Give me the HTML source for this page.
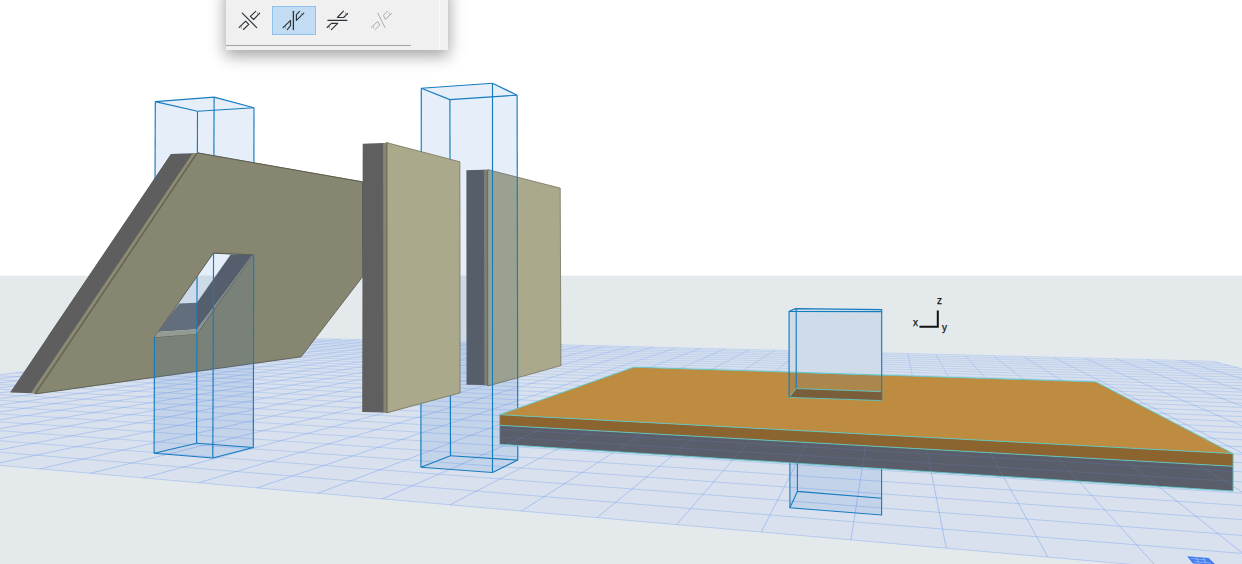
<!DOCTYPE html>
<html><head><meta charset="utf-8"><style>
html,body{margin:0;padding:0;width:1242px;height:564px;overflow:hidden;background:#fff;}
svg{display:block;}
</style></head><body>
<svg width="1242" height="564" viewBox="0 0 1242 564"><rect x="0" y="0" width="1242" height="276" fill="#ffffff"/>
<rect x="0" y="275.6" width="1242" height="289" fill="#e4e9ec"/>
<defs><clipPath id="gclip"><polygon points="2383.97,674.05 1213.25,361.21 322.87,338.65 -458.51,425.28"/></clipPath></defs>
<polygon points="2383.97,674.05 1213.25,361.21 322.87,338.65 -458.51,425.28" fill="#d8e1ed" />
<defs><linearGradient id="glg" gradientUnits="userSpaceOnUse" x1="0" y1="336" x2="0" y2="564"><stop offset="0" stop-color="#6f9bf0" stop-opacity="0.26"/><stop offset="0.3" stop-color="#6f9bf0" stop-opacity="0.38"/><stop offset="0.7" stop-color="#6f9bf0" stop-opacity="0.47"/><stop offset="1" stop-color="#6f9bf0" stop-opacity="0.5"/></linearGradient></defs>
<g stroke="url(#glg)" fill="none"><g stroke-width="0.75"><line x1="2383.97" y1="674.05" x2="-458.51" y2="425.28"/><line x1="2235.44" y1="634.35" x2="-404.59" y2="419.31"/><line x1="2113.81" y1="601.85" x2="-354.81" y2="413.79"/><line x1="2012.38" y1="574.75" x2="-308.72" y2="408.68"/><line x1="1926.51" y1="551.8" x2="-265.9" y2="403.93"/><line x1="1852.87" y1="532.13" x2="-226.04" y2="399.51"/><line x1="1789.02" y1="515.07" x2="-188.82" y2="395.38"/><line x1="1733.13" y1="500.13" x2="-154.01" y2="391.52"/><line x1="1683.8" y1="486.95" x2="-121.36" y2="387.9"/><line x1="1639.94" y1="475.23" x2="-90.69" y2="384.5"/><line x1="1600.69" y1="464.74" x2="-61.82" y2="381.3"/><line x1="1565.35" y1="455.3" x2="-34.6" y2="378.29"/><line x1="1533.38" y1="446.75" x2="-8.89" y2="375.43"/><line x1="1504.3" y1="438.98" x2="15.43" y2="372.74"/><line x1="1477.75" y1="431.89" x2="38.48" y2="370.18"/><line x1="1453.4" y1="425.38" x2="60.35" y2="367.76"/><line x1="1431.01" y1="419.4" x2="81.12" y2="365.46"/><line x1="1410.33" y1="413.87" x2="100.88" y2="363.26"/><line x1="1391.18" y1="408.75" x2="119.7" y2="361.18"/><line x1="1373.39" y1="404" x2="137.65" y2="359.19"/><line x1="1356.83" y1="399.58" x2="154.79" y2="357.29"/><line x1="1341.38" y1="395.45" x2="171.16" y2="355.47"/><line x1="1326.92" y1="391.58" x2="186.82" y2="353.74"/><line x1="1313.36" y1="387.96" x2="201.82" y2="352.07"/><line x1="1300.62" y1="384.56" x2="216.19" y2="350.48"/><line x1="1288.63" y1="381.35" x2="229.97" y2="348.95"/><line x1="1277.33" y1="378.33" x2="243.21" y2="347.49"/><line x1="1266.65" y1="375.48" x2="255.93" y2="346.08"/><line x1="1256.55" y1="372.78" x2="268.15" y2="344.72"/><line x1="1246.98" y1="370.22" x2="279.92" y2="343.41"/><line x1="1237.9" y1="367.8" x2="291.25" y2="342.16"/><line x1="1229.27" y1="365.49" x2="302.17" y2="340.95"/><line x1="1221.07" y1="363.3" x2="312.71" y2="339.78"/><line x1="1213.25" y1="361.21" x2="322.87" y2="338.65"/></g><g stroke-width="0.95"><line x1="2383.97" y1="674.05" x2="1213.25" y2="361.21"/><line x1="2183.14" y1="656.47" x2="1180.02" y2="360.37"/><line x1="1999.28" y1="640.38" x2="1147.43" y2="359.54"/><line x1="1830.32" y1="625.59" x2="1115.46" y2="358.73"/><line x1="1674.52" y1="611.96" x2="1084.11" y2="357.94"/><line x1="1530.4" y1="599.34" x2="1053.35" y2="357.16"/><line x1="1396.7" y1="587.64" x2="1023.17" y2="356.4"/><line x1="1272.32" y1="576.76" x2="993.54" y2="355.64"/><line x1="1156.32" y1="566.61" x2="964.46" y2="354.91"/><line x1="1047.89" y1="557.12" x2="935.92" y2="354.18"/><line x1="946.3" y1="548.23" x2="907.88" y2="353.47"/><line x1="850.93" y1="539.88" x2="880.35" y2="352.78"/><line x1="761.22" y1="532.03" x2="853.31" y2="352.09"/><line x1="676.69" y1="524.63" x2="826.74" y2="351.42"/><line x1="596.9" y1="517.65" x2="800.63" y2="350.76"/><line x1="521.46" y1="511.05" x2="774.98" y2="350.11"/><line x1="450.02" y1="504.79" x2="749.76" y2="349.47"/><line x1="382.28" y1="498.87" x2="724.97" y2="348.84"/><line x1="317.95" y1="493.24" x2="700.6" y2="348.22"/><line x1="256.79" y1="487.88" x2="676.64" y2="347.62"/><line x1="198.56" y1="482.79" x2="653.07" y2="347.02"/><line x1="143.06" y1="477.93" x2="629.89" y2="346.43"/><line x1="90.1" y1="473.29" x2="607.09" y2="345.85"/><line x1="39.51" y1="468.87" x2="584.66" y2="345.29"/><line x1="-8.87" y1="464.63" x2="562.58" y2="344.73"/><line x1="-55.17" y1="460.58" x2="540.86" y2="344.18"/><line x1="-99.52" y1="456.7" x2="519.48" y2="343.63"/><line x1="-142.06" y1="452.98" x2="498.43" y2="343.1"/><line x1="-182.88" y1="449.4" x2="477.71" y2="342.58"/><line x1="-222.1" y1="445.97" x2="457.31" y2="342.06"/><line x1="-259.79" y1="442.67" x2="437.23" y2="341.55"/><line x1="-296.05" y1="439.5" x2="417.44" y2="341.05"/><line x1="-330.97" y1="436.44" x2="397.96" y2="340.56"/><line x1="-364.6" y1="433.5" x2="378.76" y2="340.07"/><line x1="-397.03" y1="430.66" x2="359.86" y2="339.59"/><line x1="-428.31" y1="427.93" x2="341.23" y2="339.12"/><line x1="-458.51" y1="425.28" x2="322.87" y2="338.65"/></g></g>
<polygon points="10.1,392.6 171,154 193.9,153.4 32.5,393.3" fill="#5e5e5e" /><polygon points="31,393.1 192.4,153.5 198.9,152.9 37.1,393.9" fill="#8b8a73" /><line x1="34.7" y1="393.6" x2="196.5" y2="153.2" stroke="#5f5e52" stroke-width="0.8"/><path d="M35.6,393.9 L197.4,152.9 L362.5,181.9 L362.5,276.8 L301.1,356.8 Z M213.5,253 L252.9,254.8 L197,333.7 L154.4,337.3 Z" fill="#878670" fill-rule="evenodd" stroke="#5a5a4d" stroke-width="0.85"/>
<polygon points="179.3,303.5 197,302.7 197,329.3 157.1,331.9" fill="#6d7075" />
<polygon points="157.1,331.9 197,329.3 197,333.7 154.4,337.3" fill="#a3a38c" />
<polygon points="230.7,254.8 252.9,254.8 197,329 197,302.7" fill="#5d5f62" stroke="#5d5f62" stroke-width="0.3"/>
<line x1="252.6" y1="255.3" x2="197.4" y2="330.5" stroke="#8d8d7a" stroke-width="1.3"/>
<line x1="213.5" y1="253.2" x2="252.9" y2="255" stroke="#55554a" stroke-width="0.8"/>
<line x1="253.3" y1="255.8" x2="198" y2="332" stroke="#66665a" stroke-width="0.5"/>
<polygon points="155.3,101.6 214.1,97.1 254,107.7 253.3,447.5 212.8,458 154.1,453.2" fill="rgba(20,95,200,0.105)" />
<g stroke="#167cc0" stroke-width="1.15" fill="none"><line x1="155.3" y1="101.6" x2="214.1" y2="97.1"/><line x1="214.1" y1="97.1" x2="254" y2="107.7"/><line x1="254" y1="107.7" x2="197.5" y2="111.3"/><line x1="197.5" y1="111.3" x2="155.3" y2="101.6"/><line x1="154.1" y1="453.2" x2="212.8" y2="458"/><line x1="212.8" y1="458" x2="253.3" y2="447.5"/><line x1="253.3" y1="447.5" x2="196.6" y2="443.3"/><line x1="196.6" y1="443.3" x2="154.1" y2="453.2"/><line x1="155.3" y1="101.6" x2="154.1" y2="453.2"/><line x1="214.1" y1="97.1" x2="212.8" y2="458"/><line x1="254" y1="107.7" x2="253.3" y2="447.5"/><line x1="197.5" y1="111.3" x2="196.6" y2="443.3"/></g>
<defs><clipPath id="pclip"><polygon points="0,0 1242,0 1242,254.8 252.9,254.8 213.5,253 154.4,337.3 0,337.3"/></clipPath></defs>
<g clip-path="url(#pclip)"><polygon points="10.1,392.6 171,154 193.9,153.4 32.5,393.3" fill="#5e5e5e" /><polygon points="31,393.1 192.4,153.5 198.9,152.9 37.1,393.9" fill="#8b8a73" /><line x1="34.7" y1="393.6" x2="196.5" y2="153.2" stroke="#5f5e52" stroke-width="0.8"/><path d="M35.6,393.9 L197.4,152.9 L362.5,181.9 L362.5,276.8 L301.1,356.8 Z M213.5,253 L252.9,254.8 L197,333.7 L154.4,337.3 Z" fill="#878670" fill-rule="evenodd" stroke="#5a5a4d" stroke-width="0.85"/></g>
<polygon points="466.4,170.3 483.7,169.8 485.2,169.8 485.6,385.3 484.3,385.1 466.5,384.8" fill="#5f5f5f" />
<polygon points="483.9,169.8 489.2,169.6 489.4,386 484.4,385.1" fill="#86856f" />
<line x1="487.3" y1="170" x2="487.5" y2="385.8" stroke="#6e6d5c" stroke-width="0.9"/>
<polygon points="488.2,169.7 560.2,188.1 560.9,365.6 488.4,386" fill="#aaa98b" />
<polyline points="487.6,169.6 560.2,188.1 560.9,365.6 487.8,386" fill="none" stroke="#77765f" stroke-width="0.8"/>
<polygon points="421.3,88.3 492.5,83.2 517.1,95.2 517.8,460.1 492.5,472.5 420.9,467.2" fill="rgba(20,95,200,0.105)" />
<g stroke="#167cc0" stroke-width="1.15" fill="none"><line x1="421.3" y1="88.3" x2="492.5" y2="83.2"/><line x1="492.5" y1="83.2" x2="517.1" y2="95.2"/><line x1="517.1" y1="95.2" x2="449.9" y2="99.6"/><line x1="449.9" y1="99.6" x2="421.3" y2="88.3"/><line x1="420.9" y1="467.2" x2="492.5" y2="472.5"/><line x1="492.5" y1="472.5" x2="517.8" y2="460.1"/><line x1="517.8" y1="460.1" x2="450.5" y2="455.8"/><line x1="450.5" y1="455.8" x2="420.9" y2="467.2"/><line x1="421.3" y1="88.3" x2="420.9" y2="467.2"/><line x1="492.5" y1="83.2" x2="492.5" y2="472.5"/><line x1="517.1" y1="95.2" x2="517.8" y2="460.1"/><line x1="449.9" y1="99.6" x2="450.5" y2="455.8"/></g>
<polygon points="362.7,143.8 383.2,143 384.6,143 384.8,412.6 383.4,412.4 362.2,411.9" fill="#5f5f5f" />
<polygon points="383.1,143 388.6,142.6 388.8,412.9 383.5,412.4" fill="#86856f" />
<line x1="386.6" y1="143" x2="386.8" y2="412.6" stroke="#6e6d5c" stroke-width="0.9"/>
<polygon points="387.6,142.7 459.9,161.8 460.1,392.9 387.8,412.9" fill="#aaa98b" />
<polyline points="386.1,142.5 459.9,161.8 460.1,392.9 386.4,412.9" fill="none" stroke="#77765f" stroke-width="0.8"/>
<polygon points="789.9,455 881.6,455 881.6,515 789.9,507.8" fill="rgba(20,95,200,0.105)" />
<g stroke="#167cc0" stroke-width="1.1" fill="none"><polyline points="789.9,455 789.9,507.8 881.6,515 881.6,455"/><polyline points="797.4,455 797.4,491.4 881.6,498.2"/></g>
<line x1="797.4" y1="491.4" x2="789.9" y2="507.8" stroke="#167cc0" stroke-width="1.1"/>
<polygon points="499.6,425.3 1233.1,466.3 1233.1,491.1 499.6,444.3" fill="#5a5e6b" />
<defs><clipPath id="gsclip"><polygon points="499.6,425.3 1233.1,466.3 1233.1,491.1 499.6,444.3"/></clipPath></defs>
<g clip-path="url(#gsclip)" opacity="0.42"><g stroke="url(#glg)" fill="none"><g stroke-width="0.75"><line x1="2383.97" y1="674.05" x2="-458.51" y2="425.28"/><line x1="2235.44" y1="634.35" x2="-404.59" y2="419.31"/><line x1="2113.81" y1="601.85" x2="-354.81" y2="413.79"/><line x1="2012.38" y1="574.75" x2="-308.72" y2="408.68"/><line x1="1926.51" y1="551.8" x2="-265.9" y2="403.93"/><line x1="1852.87" y1="532.13" x2="-226.04" y2="399.51"/><line x1="1789.02" y1="515.07" x2="-188.82" y2="395.38"/><line x1="1733.13" y1="500.13" x2="-154.01" y2="391.52"/><line x1="1683.8" y1="486.95" x2="-121.36" y2="387.9"/><line x1="1639.94" y1="475.23" x2="-90.69" y2="384.5"/><line x1="1600.69" y1="464.74" x2="-61.82" y2="381.3"/><line x1="1565.35" y1="455.3" x2="-34.6" y2="378.29"/><line x1="1533.38" y1="446.75" x2="-8.89" y2="375.43"/><line x1="1504.3" y1="438.98" x2="15.43" y2="372.74"/><line x1="1477.75" y1="431.89" x2="38.48" y2="370.18"/><line x1="1453.4" y1="425.38" x2="60.35" y2="367.76"/><line x1="1431.01" y1="419.4" x2="81.12" y2="365.46"/><line x1="1410.33" y1="413.87" x2="100.88" y2="363.26"/><line x1="1391.18" y1="408.75" x2="119.7" y2="361.18"/><line x1="1373.39" y1="404" x2="137.65" y2="359.19"/><line x1="1356.83" y1="399.58" x2="154.79" y2="357.29"/><line x1="1341.38" y1="395.45" x2="171.16" y2="355.47"/><line x1="1326.92" y1="391.58" x2="186.82" y2="353.74"/><line x1="1313.36" y1="387.96" x2="201.82" y2="352.07"/><line x1="1300.62" y1="384.56" x2="216.19" y2="350.48"/><line x1="1288.63" y1="381.35" x2="229.97" y2="348.95"/><line x1="1277.33" y1="378.33" x2="243.21" y2="347.49"/><line x1="1266.65" y1="375.48" x2="255.93" y2="346.08"/><line x1="1256.55" y1="372.78" x2="268.15" y2="344.72"/><line x1="1246.98" y1="370.22" x2="279.92" y2="343.41"/><line x1="1237.9" y1="367.8" x2="291.25" y2="342.16"/><line x1="1229.27" y1="365.49" x2="302.17" y2="340.95"/><line x1="1221.07" y1="363.3" x2="312.71" y2="339.78"/><line x1="1213.25" y1="361.21" x2="322.87" y2="338.65"/></g><g stroke-width="0.95"><line x1="2383.97" y1="674.05" x2="1213.25" y2="361.21"/><line x1="2183.14" y1="656.47" x2="1180.02" y2="360.37"/><line x1="1999.28" y1="640.38" x2="1147.43" y2="359.54"/><line x1="1830.32" y1="625.59" x2="1115.46" y2="358.73"/><line x1="1674.52" y1="611.96" x2="1084.11" y2="357.94"/><line x1="1530.4" y1="599.34" x2="1053.35" y2="357.16"/><line x1="1396.7" y1="587.64" x2="1023.17" y2="356.4"/><line x1="1272.32" y1="576.76" x2="993.54" y2="355.64"/><line x1="1156.32" y1="566.61" x2="964.46" y2="354.91"/><line x1="1047.89" y1="557.12" x2="935.92" y2="354.18"/><line x1="946.3" y1="548.23" x2="907.88" y2="353.47"/><line x1="850.93" y1="539.88" x2="880.35" y2="352.78"/><line x1="761.22" y1="532.03" x2="853.31" y2="352.09"/><line x1="676.69" y1="524.63" x2="826.74" y2="351.42"/><line x1="596.9" y1="517.65" x2="800.63" y2="350.76"/><line x1="521.46" y1="511.05" x2="774.98" y2="350.11"/><line x1="450.02" y1="504.79" x2="749.76" y2="349.47"/><line x1="382.28" y1="498.87" x2="724.97" y2="348.84"/><line x1="317.95" y1="493.24" x2="700.6" y2="348.22"/><line x1="256.79" y1="487.88" x2="676.64" y2="347.62"/><line x1="198.56" y1="482.79" x2="653.07" y2="347.02"/><line x1="143.06" y1="477.93" x2="629.89" y2="346.43"/><line x1="90.1" y1="473.29" x2="607.09" y2="345.85"/><line x1="39.51" y1="468.87" x2="584.66" y2="345.29"/><line x1="-8.87" y1="464.63" x2="562.58" y2="344.73"/><line x1="-55.17" y1="460.58" x2="540.86" y2="344.18"/><line x1="-99.52" y1="456.7" x2="519.48" y2="343.63"/><line x1="-142.06" y1="452.98" x2="498.43" y2="343.1"/><line x1="-182.88" y1="449.4" x2="477.71" y2="342.58"/><line x1="-222.1" y1="445.97" x2="457.31" y2="342.06"/><line x1="-259.79" y1="442.67" x2="437.23" y2="341.55"/><line x1="-296.05" y1="439.5" x2="417.44" y2="341.05"/><line x1="-330.97" y1="436.44" x2="397.96" y2="340.56"/><line x1="-364.6" y1="433.5" x2="378.76" y2="340.07"/><line x1="-397.03" y1="430.66" x2="359.86" y2="339.59"/><line x1="-428.31" y1="427.93" x2="341.23" y2="339.12"/><line x1="-458.51" y1="425.28" x2="322.87" y2="338.65"/></g></g></g>
<polygon points="499.6,414.7 1233.1,453.6 1233.1,466.3 499.6,425.3" fill="#8b6430" />
<polygon points="499.6,414.7 633.7,367.2 1096,381.9 1233.1,453.6" fill="#be8c40" />
<g stroke="#5ec8c6" stroke-width="0.9" fill="none"><polygon points="499.6,414.7 633.7,367.2 1096,381.9 1233.1,453.6"/><line x1="499.6" y1="425.3" x2="1233.1" y2="466.3"/><polyline points="499.6,414.7 499.6,444.3 1233.1,491.1 1233.1,453.6"/></g>
<polygon points="789.1,311.3 795.5,308.7 881.7,309.6 881.7,375.3 789.1,372.3" fill="#d0dbe9" />
<polygon points="789.1,371.6 881.7,374.6 881.7,400.6 789.1,397.4" fill="rgba(20,95,200,0.105)" />
<line x1="789.1" y1="372.1" x2="881.7" y2="375.1" stroke="#5ec8c6" stroke-width="0.9"/>
<polygon points="796.2,388.5 881.7,391.7 881.7,400.6 789.1,397.4" fill="#7a5e3c" />
<g stroke="#5ec8c6" stroke-width="0.9" fill="none"><polyline points="796.2,388.5 881.7,391.7"/><polyline points="796.2,388.5 789.1,397.4 881.7,400.6"/></g>
<g stroke="#167cc0" stroke-width="1.15" fill="none"><polyline points="789.1,397.4 789.1,311.3 795.5,308.7 881.7,309.6 881.7,400.6"/><line x1="789.1" y1="311.5" x2="881.7" y2="311.6"/><line x1="796.2" y1="309" x2="796.2" y2="388.5"/></g>
<g stroke="#111" stroke-width="2" fill="none"><polyline points="919.5,326.8 937.8,326.8 937.8,310.6"/></g>
<text x="937.0" y="303.7" font-family="Liberation Sans, sans-serif" font-size="10" fill="#111" stroke="#111" stroke-width="0.25">z</text>
<text x="913.0" y="326.0" font-family="Liberation Sans, sans-serif" font-size="10" fill="#111" stroke="#111" stroke-width="0.25">x</text>
<text x="942.1" y="331.4" font-family="Liberation Sans, sans-serif" font-size="10" fill="#111" stroke="#111" stroke-width="0.25">y</text>
<polygon points="1187.2,556.2 1208.6,558 1215.5,564.5 1192.9,563.5" fill="#3f7bf3" />
<g stroke="#b5ccf7" stroke-width="0.7" opacity="0.9"><line x1="1191" y1="558.5" x2="1206" y2="560"/><line x1="1194" y1="561.5" x2="1211" y2="563"/><line x1="1196" y1="557" x2="1199" y2="563"/><line x1="1203" y1="557.6" x2="1206" y2="563.6"/></g>
<defs><filter id="sh" x="-40%" y="-120%" width="180%" height="340%"><feGaussianBlur stdDeviation="8"/></filter></defs>
<rect x="225" y="-10" width="224" height="66" fill="rgba(0,0,0,0.36)" filter="url(#sh)"/>
<rect x="226" y="0" width="222" height="50" fill="#f0f0f0"/>
<rect x="439" y="0" width="1" height="50" fill="#fafafa"/>
<rect x="226" y="45" width="185" height="1" fill="#a3a3a3"/>
<rect x="272.5" y="6.5" width="43" height="28" fill="#c2ddf3" stroke="#8fc2ee" stroke-width="1"/>
<g stroke="#2d3337" stroke-width="1.15" fill="none" stroke-linecap="round" stroke-linejoin="round">
<line x1="242.3" y1="13.2" x2="256.7" y2="27.6"/>
<polyline points="255.7,11.3 250.4,16.4 253.6,19.5 259.7,13.2"/>
<polyline points="239.2,27.3 245.6,21.2 248.8,24.4 243.4,29.5"/>
<line x1="293.4" y1="11.3" x2="293.4" y2="29.6" stroke-width="1.3"/>
<polyline points="299.5,11.3 296.4,14.6 296.4,20.4 303.8,13.2"/>
<polyline points="283.1,27.6 290.5,20.4 290.5,25.7 287.3,29.6"/>
<line x1="328" y1="20.4" x2="346.8" y2="20.4" stroke-width="1.4"/>
<polyline points="343.4,11.2 337.4,17.5 343.6,17.5 347.6,13.5"/>
<polyline points="327.2,27.5 331.4,23.4 337.7,23.4 331.4,29.6"/>
</g>
<g stroke="#7d8386" stroke-width="0.7" fill="none">
<line x1="257.6" y1="12.3" x2="257.6" y2="15.3"/><line x1="241.3" y1="26" x2="241.3" y2="28.6"/>
<line x1="301.4" y1="13" x2="301.4" y2="15.6"/><line x1="285.4" y1="26.3" x2="285.4" y2="28.7"/>
<line x1="345.6" y1="12.2" x2="345.6" y2="15.9"/><line x1="329.5" y1="25.1" x2="329.5" y2="28.6"/>
</g>
<g stroke="#ababab" stroke-width="1" fill="none" stroke-linecap="round" stroke-linejoin="round">
<line x1="377.9" y1="13.2" x2="384.9" y2="27.4"/>
<polyline points="387.6,11.2 383.4,15.4 385.4,19.4 391.6,13.5"/>
<polyline points="371.2,27.5 377.7,21.4 379.7,25.1 375.2,29.6"/>
<line x1="389.3" y1="12.5" x2="389.3" y2="15.4" stroke-width="0.6"/><line x1="373.5" y1="26.4" x2="373.5" y2="28.4" stroke-width="0.6"/>
</g></svg>
</body></html>
